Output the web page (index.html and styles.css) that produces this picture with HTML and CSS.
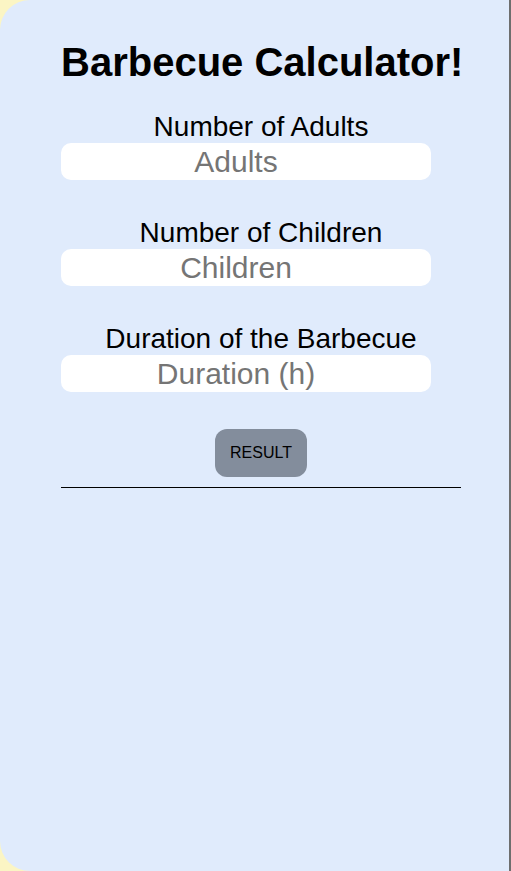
FILE: index.html
```html
<!DOCTYPE html>
<html>
<head>
<meta charset="utf-8">
<link rel="stylesheet" href="styles.css">
</head>
<body>
<div class="card">
  <div class="content">
    <h1 class="title">Barbecue Calculator!</h1>
    <div class="group">
      <label class="label">Number of Adults</label>
      <input class="field" type="text" placeholder="Adults">
    </div>
    <div class="group">
      <label class="label">Number of Children</label>
      <input class="field" type="text" placeholder="Children">
    </div>
    <div class="group">
      <label class="label">Duration of the Barbecue</label>
      <input class="field" type="text" placeholder="Duration (h)">
    </div>
    <div class="actions">
      <button class="btn">RESULT</button>
    </div>
    <div class="divider"></div>
  </div>
</div>
</body>
</html>
```
FILE: styles.css
```css
html, body {
  margin: 0;
  padding: 0;
}
body {
  background: #fbf5c4;
  font-family: "Liberation Sans", Arial, sans-serif;
  height: 871px;
  overflow: hidden;
}
.card {
  box-sizing: border-box;
  height: 871px;
  background: #e0ebfc;
  border-radius: 30px 0 0 30px;
  border-right: 2px solid #6e6e6e;
  padding-top: 39px;
}
.content {
  width: 400px;
  margin-left: 61px;
  display: flex;
  flex-direction: column;
}
.title {
  margin: 0;
  font-size: 40px;
  line-height: 46px;
  font-weight: bold;
  text-align: center;
  white-space: nowrap;
  color: #000;
  margin-bottom: 26px;
}
.group {
  display: flex;
  flex-direction: column;
  margin-bottom: 37px;
}
.label {
  font-size: 28px;
  line-height: 32px;
  text-align: center;
  color: #000;
}
.field {
  box-sizing: border-box;
  width: 370px;
  height: 37px;
  border: none;
  border-radius: 10px;
  background: #fff;
  font-family: "Liberation Sans", Arial, sans-serif;
  font-size: 30px;
  text-align: center;
  padding: 0 20px 0 0;
  outline: none;
}
.field::placeholder {
  color: #757575;
}
.actions {
  display: flex;
  justify-content: center;
}
.btn {
  width: 92px;
  height: 48px;
  border: none;
  border-radius: 12px;
  background: #838d9c;
  color: #000;
  font-family: "Liberation Sans", Arial, sans-serif;
  font-size: 16px;
  padding: 0;
}
.divider {
  margin-top: 10px;
  height: 1px;
  background: #000;
}
```
